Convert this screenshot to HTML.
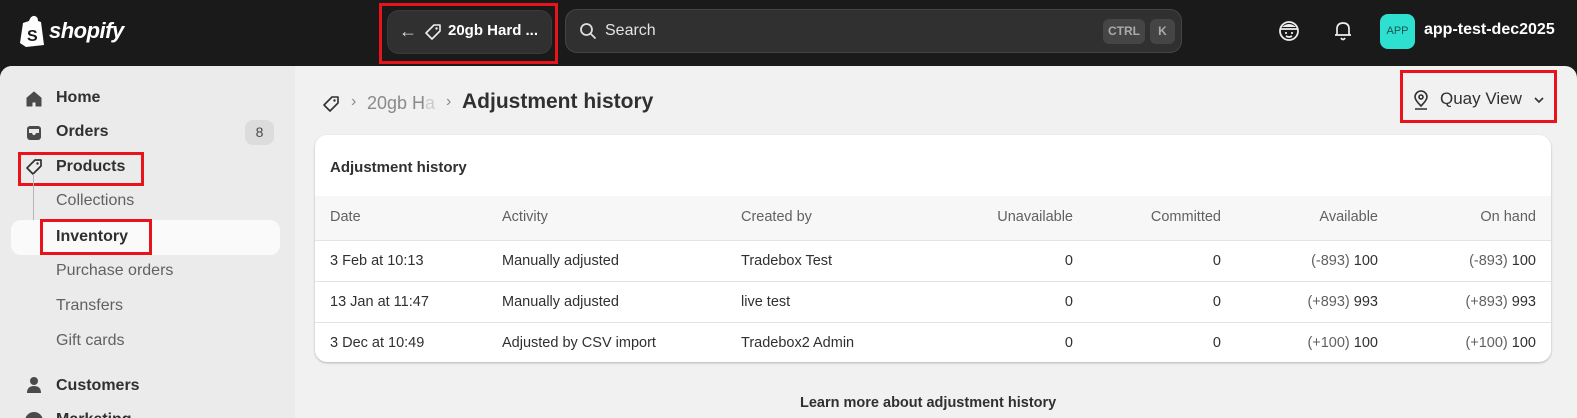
<!DOCTYPE html>
<html><head><meta charset="utf-8"><style>
*{box-sizing:border-box;margin:0;padding:0}
body{width:1577px;height:418px;overflow:hidden;background:#1a1a1a;font-family:"Liberation Sans",sans-serif;color:#303030;position:relative}
.abs{position:absolute}
.top{left:0;top:0;width:1577px;height:66px;background:#1a1a1a}
.frame{left:0;top:66px;width:1577px;height:352px;background:#f1f1f1;border-radius:12px 12px 0 0;overflow:hidden}
.side{left:0;top:0;width:295px;height:352px;background:#ebebeb}
.nav{position:absolute;left:56px;font-size:16px;color:#303030}
.b{font-weight:bold}
.sub{color:#616161;font-weight:normal}
.red{position:absolute;border:3px solid #e8141c}
.card{left:315px;top:69px;width:1236px;height:227px;background:#fff;border-radius:12px;box-shadow:0 1px 2px rgba(0,0,0,.25);overflow:hidden}
.row{position:absolute;left:0;width:1236px;font-size:14.5px;border-top:1px solid #e3e3e3}
.row span{position:absolute;top:0}
.r{text-align:right}
.g{color:#616161}
</style></head><body>
<div class="abs top">
  <svg class="abs" style="left:20px;top:15px" width="24" height="32" viewBox="0 0 24 32"><path d="M3 8 L9 6 Q11 0 15 1 Q18 2 18 6 L21 7 L24 30 L6 32 L0 28 Z" fill="#fff"/><text x="7" y="26" font-size="16" font-weight="bold" fill="#1a1a1a" font-family="Liberation Sans">S</text></svg>
  <div class="abs" style="left:49px;top:18px;color:#fff;font-weight:bold;font-style:italic;font-size:22px;letter-spacing:-0.5px">shopify</div>
  <div class="abs" style="left:387px;top:10px;width:165px;height:44px;background:#303030;border-radius:12px;border:1px solid #3a3a3a"></div>
  <div class="abs" style="left:399px;top:21px;color:#ddd;font-size:18px">←</div>
  <svg class="abs" style="left:424px;top:23px" width="18" height="18" viewBox="0 0 18 18"><path d="M10 2 H16 V8 L8 16 L2 10 Z" fill="none" stroke="#eee" stroke-width="1.6" stroke-linejoin="round"/><circle cx="12.5" cy="5.5" r="1.2" fill="#eee"/></svg>
  <div class="abs b" style="left:448px;top:22px;color:#fff;font-size:15px">20gb Hard ...</div>
  <div class="red" style="left:379px;top:3px;width:179px;height:61px"></div>
  <div class="abs" style="left:565px;top:9px;width:617px;height:44px;background:#303030;border-radius:12px;border:1px solid #444"></div>
  <svg class="abs" style="left:579px;top:22px" width="18" height="18" viewBox="0 0 18 18"><circle cx="7.5" cy="7.5" r="5.5" fill="none" stroke="#ddd" stroke-width="1.8"/><path d="M11.5 11.5 L16 16" stroke="#ddd" stroke-width="1.8" stroke-linecap="round"/></svg>
  <div class="abs" style="left:605px;top:22px;color:#e3e3e3;font-size:16px">Search</div>
  <div class="abs b" style="left:1103px;top:19px;width:42px;height:25px;background:#454545;border-radius:6px;color:#aaa;font-size:12px;line-height:25px;text-align:center">CTRL</div>
  <div class="abs b" style="left:1150px;top:19px;width:25px;height:25px;background:#454545;border-radius:6px;color:#aaa;font-size:12px;line-height:25px;text-align:center">K</div>
  <svg class="abs" style="left:1278px;top:20px" width="22" height="22" viewBox="0 0 22 22"><circle cx="11" cy="11" r="9" fill="none" stroke="#eee" stroke-width="1.8"/><path d="M3 9 H19 M7 13 H9 M13 13 H15 M8 16 Q11 18 14 16" stroke="#eee" stroke-width="1.8" fill="none"/><path d="M4 7 Q11 1 18 7" fill="#eee"/></svg>
  <svg class="abs" style="left:1333px;top:20px" width="20" height="22" viewBox="0 0 20 22"><path d="M4 15 V9 Q4 3 10 3 Q16 3 16 9 V15 H4 Z M2 15 H18 M8 18 Q10 21 12 18" fill="none" stroke="#eee" stroke-width="1.7" stroke-linejoin="round"/></svg>
  <div class="abs" style="left:1380px;top:14px;width:35px;height:35px;background:#2ee0d0;border-radius:8px;color:#1a5550;font-size:11px;line-height:35px;text-align:center">APP</div>
  <div class="abs b" style="left:1424px;top:21px;color:#fff;font-size:16px">app-test-dec2025</div>
</div>
<div class="abs frame">
  <div class="abs side">
    <svg class="abs" style="left:25px;top:24px" width="18" height="18" viewBox="0 0 18 18"><path d="M2 8 L9 2 L16 8 V16 H11 V12 H7 V16 H2 Z" fill="#4a4a4a" stroke="#4a4a4a" stroke-linejoin="round"/></svg>
    <div class="nav b" style="top:23px">Home</div>
    <svg class="abs" style="left:25px;top:58px" width="18" height="18" viewBox="0 0 18 18"><rect x="2" y="2" width="14" height="14" rx="3" fill="#4a4a4a"/><path d="M4 9 H7 L8 11 H10 L11 9 H14 V5 H4 Z" fill="#ebebeb"/></svg>
    <div class="nav b" style="top:57px">Orders</div>
    <div class="abs" style="left:245px;top:54px;width:29px;height:25px;background:#dcdcdc;border-radius:8px;font-size:14px;line-height:25px;text-align:center;color:#4a4a4a">8</div>
    <svg class="abs" style="left:25px;top:92px" width="18" height="18" viewBox="0 0 18 18"><path d="M10 2 H16 V8 L8 16 L2 10 Z" fill="none" stroke="#303030" stroke-width="1.7" stroke-linejoin="round"/><circle cx="12.5" cy="5.5" r="1.2" fill="#303030"/></svg>
    <div class="nav b" style="top:92px">Products</div>
    <div class="red" style="left:18px;top:86px;width:126px;height:34px"></div>
    <div class="abs" style="left:33px;top:108px;width:12px;height:59px;border-left:1.5px solid #b5b5b5;border-bottom:1.5px solid #b5b5b5;border-radius:0 0 0 4px"></div>
    <div class="nav sub" style="top:126px">Collections</div>
    <div class="abs" style="left:11px;top:154px;width:269px;height:35px;background:#fafafa;border-radius:10px"></div>
    <div class="nav b" style="top:162px">Inventory</div>
    <div class="red" style="left:40px;top:153px;width:112px;height:36px"></div>
    <div class="nav sub" style="top:196px">Purchase orders</div>
    <div class="nav sub" style="top:231px">Transfers</div>
    <div class="nav sub" style="top:266px">Gift cards</div>
    <svg class="abs" style="left:25px;top:310px" width="18" height="18" viewBox="0 0 18 18"><circle cx="9" cy="5" r="4" fill="#4a4a4a"/><path d="M2 17 Q2 10 9 10 Q16 10 16 17 Z" fill="#4a4a4a"/></svg>
    <div class="nav b" style="top:311px">Customers</div>
    <div class="nav b" style="top:345px">Marketing</div>
    <div class="abs" style="left:25px;top:346px;width:18px;height:18px;border-radius:50%;background:#4a4a4a"></div>
  </div>
  <svg class="abs" style="left:322px;top:29px" width="18" height="18" viewBox="0 0 18 18"><path d="M10 2 H16 V8 L8 16 L2 10 Z" fill="none" stroke="#303030" stroke-width="1.6" stroke-linejoin="round"/><circle cx="12.5" cy="5.5" r="1.2" fill="#303030"/></svg>
  <div class="abs" style="left:351px;top:27px;color:#8a8a8a;font-size:16px">›</div>
  <div class="abs" style="left:367px;top:27px;color:#8a8a8a;font-size:18px">20gb H<span style="color:#ccc">a</span></div>
  <div class="abs" style="left:446px;top:27px;color:#8a8a8a;font-size:16px">›</div>
  <div class="abs b" style="left:462px;top:24px;font-size:21px;color:#303030">Adjustment history</div>
  <svg class="abs" style="left:1412px;top:23px" width="18" height="22" viewBox="0 0 18 22"><path d="M9 17 Q3 11 3 8 A6 6 0 0 1 15 8 Q15 11 9 17 Z" fill="none" stroke="#303030" stroke-width="1.6"/><circle cx="9" cy="8" r="2" fill="none" stroke="#303030" stroke-width="1.6"/><path d="M3 20 H15" stroke="#303030" stroke-width="1.6"/></svg>
  <div class="abs" style="left:1440px;top:23px;font-size:17px">Quay View</div>
  <svg class="abs" style="left:1533px;top:29px" width="12" height="10" viewBox="0 0 12 10"><path d="M2 3 L6 7 L10 3" fill="none" stroke="#303030" stroke-width="1.6"/></svg>
  <div class="red" style="left:1400px;top:4px;width:157px;height:53px"></div>
  <div class="abs card">
    <div class="abs b" style="left:15px;top:24px;font-size:15px">Adjustment history</div>
    <div class="row g" style="top:61px;height:44px;background:#f7f7f7;border-top:none;line-height:42px;color:#616161">
      <span style="left:15px">Date</span><span style="left:187px">Activity</span><span style="left:426px">Created by</span>
      <span class="r" style="right:478px">Unavailable</span><span class="r" style="right:330px">Committed</span><span class="r" style="right:173px">Available</span><span class="r" style="right:15px">On hand</span>
    </div>
    <div class="row" style="top:105px;height:41px;line-height:40px">
      <span style="left:15px">3 Feb at 10:13</span><span style="left:187px">Manually adjusted</span><span style="left:426px">Tradebox Test</span>
      <span style="right:478px">0</span><span style="right:330px">0</span><span style="right:173px"><i class="g" style="font-style:normal">(-893)</i> 100</span><span style="right:15px"><i class="g" style="font-style:normal">(-893)</i> 100</span>
    </div>
    <div class="row" style="top:146px;height:41px;line-height:40px">
      <span style="left:15px">13 Jan at 11:47</span><span style="left:187px">Manually adjusted</span><span style="left:426px">live test</span>
      <span style="right:478px">0</span><span style="right:330px">0</span><span style="right:173px"><i class="g" style="font-style:normal">(+893)</i> 993</span><span style="right:15px"><i class="g" style="font-style:normal">(+893)</i> 993</span>
    </div>
    <div class="row" style="top:187px;height:40px;line-height:40px">
      <span style="left:15px">3 Dec at 10:49</span><span style="left:187px">Adjusted by CSV import</span><span style="left:426px">Tradebox2 Admin</span>
      <span style="right:478px">0</span><span style="right:330px">0</span><span style="right:173px"><i class="g" style="font-style:normal">(+100)</i> 100</span><span style="right:15px"><i class="g" style="font-style:normal">(+100)</i> 100</span>
    </div>
  </div>
  <div class="abs b" style="left:800px;top:329px;font-size:14.5px;color:#303030">Learn more about adjustment history</div>
</div>
</body></html>
